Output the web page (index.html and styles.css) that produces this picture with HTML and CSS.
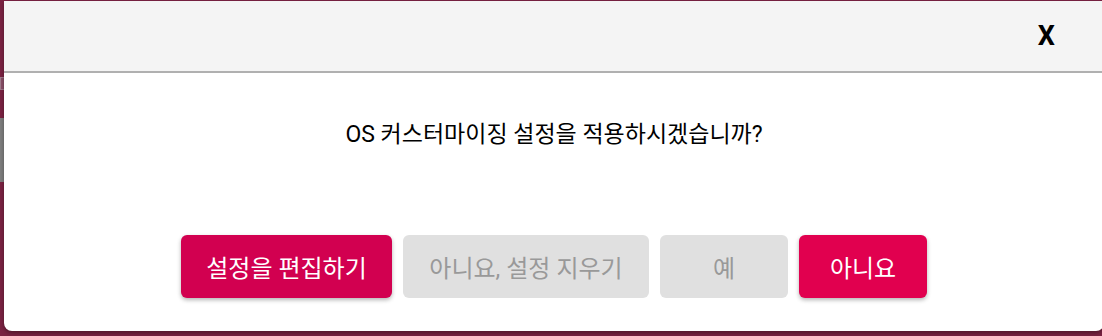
FILE: index.html
```html
<!DOCTYPE html>
<html lang="ko">
<head>
<meta charset="utf-8">
<link rel="stylesheet" href="styles.css">
</head>
<body>
<div class="bg-box bg-box-a"></div>
<div class="bg-box bg-box-b"></div>
<div class="dialog">
  <div class="header">
    <button class="close">X</button>
  </div>
  <div class="content">
    <p class="message">OS 커스터마이징 설정을 적용하시겠습니까?</p>
    <div class="actions">
      <button class="btn btn-edit">설정을 편집하기</button>
      <button class="btn btn-gray btn-clear">아니요, 설정 지우기</button>
      <button class="btn btn-gray btn-small">예</button>
      <button class="btn btn-no btn-small">아니요</button>
    </div>
  </div>
</div>
</body>
</html>
```
FILE: styles.css
```css
html, body {
  margin: 0;
  padding: 0;
}
body {
  width: 1102px;
  height: 336px;
  overflow: hidden;
  background: #7a2242;
  font-family: Roboto, "Noto Sans CJK KR", sans-serif;
  position: relative;
}
.bg-box {
  position: absolute;
  left: 0;
  width: 10px;
}
.bg-box-a {
  top: 77px;
  height: 13px;
  background: #8a5068;
  box-shadow: inset 0 0 0 1px #a07a8c;
}
.bg-box-b {
  top: 118px;
  height: 64px;
  background: #7e7e7e;
}
.dialog {
  position: relative;
  margin: 1px 0 0 4px;
  width: 1100px;
  height: 330px;
  background: #fff;
  border-radius: 0 0 8px 8px;
  box-shadow: 0 2px 4px rgba(0, 0, 0, 0.35);
  display: flex;
  flex-direction: column;
}
.header {
  height: 70px;
  background: #f4f4f4;
  border-bottom: 2px solid #b0b0b0;
  display: flex;
  justify-content: flex-end;
  align-items: center;
  padding-right: 49px;
}
.close {
  border: 0;
  background: transparent;
  font-family: Roboto, sans-serif;
  font-weight: 700;
  font-size: 27px;
  line-height: 30px;
  color: #000;
  padding: 0;
  margin-top: 0;
}
.content {
  flex: 1;
  display: flex;
  flex-direction: column;
  align-items: center;
}
.message {
  margin: 46px 0 0;
  font-size: 23px;
  line-height: 32px;
  color: #000;
}
.actions {
  margin-top: 84px;
  display: flex;
  gap: 11px;
}
.btn {
  height: 63px;
  border: 0;
  border-radius: 6px;
  font-family: Roboto, "Noto Sans CJK KR", sans-serif;
  font-size: 24px;
  padding: 0;
  cursor: pointer;
}
.btn-edit {
  width: 211px;
  background: #d20050;
  color: #fff;
  box-shadow: 0 2px 4px rgba(0, 0, 0, 0.3);
}
.btn-gray {
  background: #e0e0e0;
  color: #999;
}
.btn-clear {
  width: 246px;
}
.btn-small {
  width: 128px;
}
.btn-no {
  background: #e1004f;
  color: #fff;
  box-shadow: 0 2px 4px rgba(0, 0, 0, 0.3);
}
```
